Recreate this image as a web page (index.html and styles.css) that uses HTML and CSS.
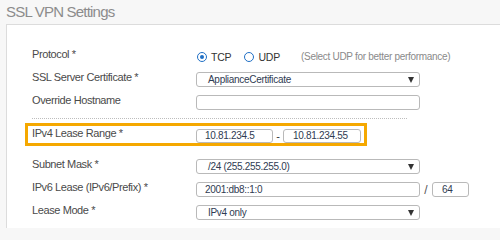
FILE: index.html
```html
<!DOCTYPE html>
<html>
<head>
<meta charset="utf-8">
<link rel="stylesheet" href="styles.css">
</head>
<body>
<div class="header"><h1 class="title">SSL VPN Settings</h1></div>
<div class="panel">
  <div class="row">
    <div class="label">Protocol *</div>
    <div class="control radios">
      <span class="radio checked"></span><span class="rlabel">TCP</span>
      <span class="radio"></span><span class="rlabel">UDP</span>
      <span class="hint">(Select UDP for better performance)</span>
    </div>
  </div>
  <div class="row">
    <div class="label">SSL Server Certificate *</div>
    <div class="control"><div class="select wide"><span>ApplianceCertificate</span><span class="arrow"></span></div></div>
  </div>
  <div class="row">
    <div class="label">Override Hostname</div>
    <div class="control"><div class="input wide"></div></div>
  </div>
  <div class="sep"></div>
  <div class="highlight">
    <div class="label">IPv4 Lease Range *</div>
    <div class="control range">
      <div class="input ip">10.81.234.5</div>
      <span class="dash">-</span>
      <div class="input ip ip2">10.81.234.55</div>
    </div>
  </div>
  <div class="row first-after">
    <div class="label">Subnet Mask *</div>
    <div class="control"><div class="select wide"><span>/24 (255.255.255.0)</span><span class="arrow"></span></div></div>
  </div>
  <div class="row">
    <div class="label">IPv6 Lease (IPv6/Prefix) *</div>
    <div class="control range">
      <div class="input wide v6">2001:db8::1:0</div>
      <span class="slash">/</span>
      <div class="input prefix">64</div>
    </div>
  </div>
  <div class="row">
    <div class="label">Lease Mode *</div>
    <div class="control"><div class="select wide"><span>IPv4 only</span><span class="arrow"></span></div></div>
  </div>
</div>
</body>
</html>
```
FILE: styles.css
```css
html, body {
  margin: 0;
  padding: 0;
  background: #f7f7f7;
  font-family: "Liberation Sans", Arial, sans-serif;
  width: 500px;
  height: 229px;
  overflow: hidden;
}
.header {
  height: 24px;
  padding-left: 6px;
}
.title {
  margin: 0;
  font-size: 15px;
  letter-spacing: -0.8px;
  font-weight: normal;
  color: #8c8c8c;
  line-height: 24px;
}
.panel {
  margin-left: 6px;
  border-top: 1px solid #dcdcdc;
  border-left: 1px solid #dcdcdc;
  background: #fff;
  padding: 24px 0 0 25px;
  height: 204px;
  box-sizing: border-box;
}
.row {
  display: flex;
  align-items: flex-start;
  height: 15px;
  margin-bottom: 8px;
}
.label {
  width: 164px;
  flex: none;
  font-size: 11px;
  letter-spacing: -0.4px;
  color: #4a4a4a;
  line-height: 13px;
  margin-top: -1px;
}
.control {
  display: flex;
  align-items: center;
  height: 15px;
}
.radios {
  font-size: 10.5px;
  letter-spacing: -0.2px;
  color: #333;
}
.radio {
  width: 8px;
  height: 8px;
  border: 1px solid #1f6fc5;
  border-radius: 50%;
  box-sizing: content-box;
  margin-left: 1px;
  margin-right: 4px;
  position: relative;
}
.radio + .rlabel + .radio { margin-left: 13px; }
.radio.checked::after {
  content: "";
  position: absolute;
  left: 2px;
  top: 2px;
  width: 4px;
  height: 4px;
  border-radius: 50%;
  background: #1f6fc5;
}
.rlabel { color: #333; }
.hint {
  margin-left: 21px;
  color: #8a8a8a;
  font-size: 10px;
  letter-spacing: -0.3px;
}
.select, .input {
  box-sizing: border-box;
  height: 15px;
  border: 1px solid #b9b9b9;
  border-radius: 3px;
  background: #fff;
  font-size: 10px;
  letter-spacing: -0.3px;
  color: #2f3b52;
  display: flex;
  align-items: center;
  padding-left: 11px;
}
.wide { width: 224px; }
.select { justify-content: space-between; padding-right: 5px; }
.arrow {
  width: 0;
  height: 0;
  border-left: 3.5px solid transparent;
  border-right: 3.5px solid transparent;
  border-top: 6px solid #333;
}
.sep {
  width: 375px;
  border-top: 1px dotted #bdbdbd;
  margin-top: 2px;
  height: 0;
}
.highlight {
  margin: 4px 0 0 -7px;
  width: 342px;
  box-sizing: border-box;
  border: 3px solid #f5a800;
  height: 23px;
  display: flex;
  align-items: flex-start;
  padding: 1px 0 0 4px;
}
.highlight .label { margin-top: 0; }
.highlight .control { margin-top: 1px; height: 15px; }
.ip { width: 77px; padding-left: 8px; height: 14px; }
.ip2 { width: 78px; padding-left: 9px; }
.dash { width: 10px; text-align: center; font-size: 11px; color: #333; }
.first-after { margin-top: 13px; }
.v6 { padding-left: 8px; }
.slash { width: 12px; text-align: center; font-size: 12px; color: #555; }
.prefix { width: 37px; padding-left: 9px; }
```
